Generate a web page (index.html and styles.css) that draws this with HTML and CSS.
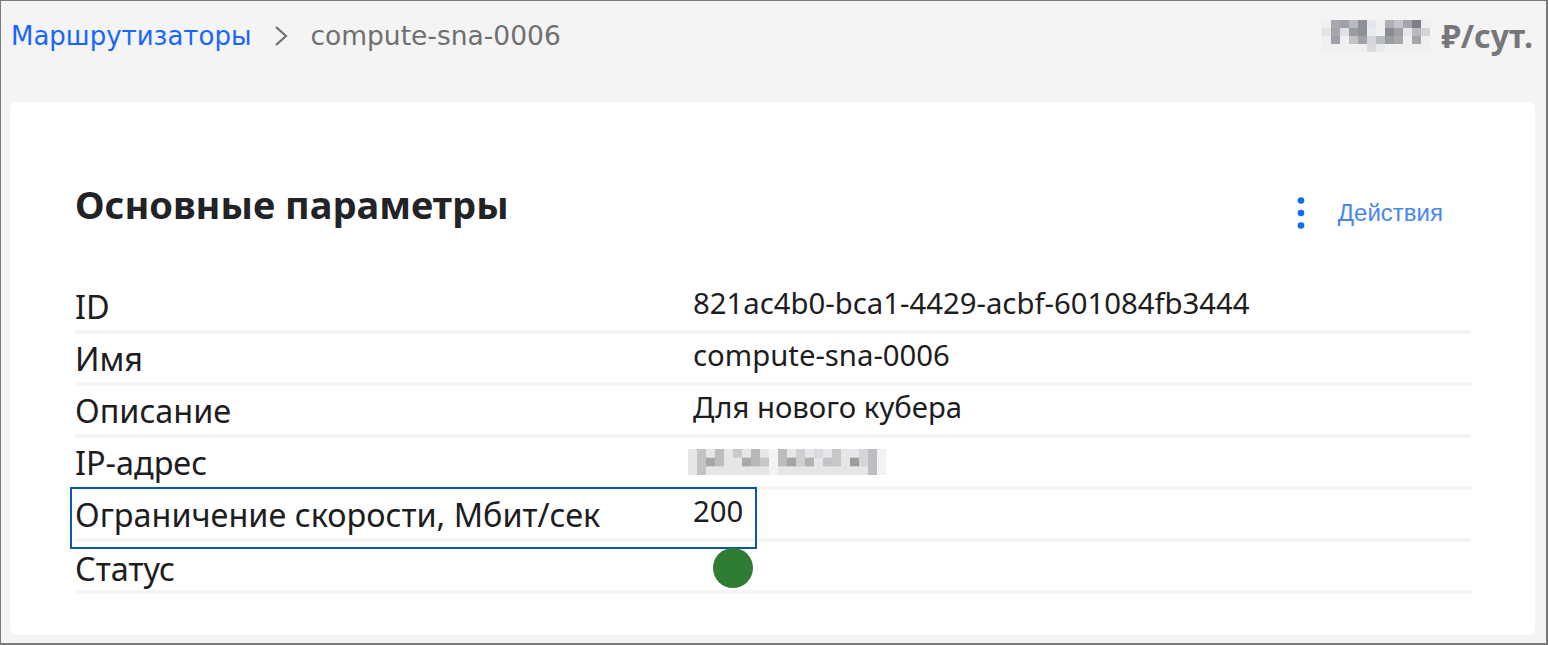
FILE: index.html
```html
<!DOCTYPE html>
<html lang="ru">
<head>
    <meta charset="UTF-8">
    <meta name="viewport" content="width=device-width, initial-scale=1.0">
    <title>compute-sna-0006</title>
    <link rel="stylesheet" href="styles.css">
</head>
<body>
    <div class="window">
        <header class="topbar">
            <nav class="crumbs">
                <a href="#" class="crumb-link">Маршрутизаторы</a>
                <svg class="crumb-sep" width="16" height="22" viewBox="0 0 16 22">
                    <polyline points="3,2 13,11 3,20" fill="none" stroke="#707070" stroke-width="2.2"/>
                </svg>
                <span class="crumb-current">compute-sna-0006</span>
            </nav>
            <div class="price">
                <!-- blurred amount -->
                <svg class="blur" width="108" height="32" viewBox="0 0 12 4" preserveAspectRatio="none">
                    <rect x="0" y="0" width="12" height="4" fill="#f0f0f1"/>
                    <rect x="1" y="0" width="1" height="1" fill="#a9a9ad"/>
                    <rect x="2" y="0" width="1" height="1" fill="#9ea3ab"/>
                    <rect x="3" y="0" width="1" height="1" fill="#b9b9bd"/>
                    <rect x="4" y="0" width="1" height="2" fill="#8f9096"/>
                    <rect x="5" y="0" width="1" height="1" fill="#e3e6ec"/>
                    <rect x="7" y="0" width="1" height="1" fill="#aeb0b6"/>
                    <rect x="8" y="0" width="1" height="1" fill="#c4c6ca"/>
                    <rect x="9" y="0" width="1" height="1" fill="#a4a5aa"/>
                    <rect x="10" y="0" width="1" height="1" fill="#7d7f86"/>
                    <rect x="0" y="1" width="1" height="1" fill="#e4e4e6"/>
                    <rect x="1" y="1" width="1" height="1" fill="#a8a6a8"/>
                    <rect x="2" y="1" width="1" height="1" fill="#dde2e8"/>
                    <rect x="3" y="1" width="1" height="1" fill="#9c9ca0"/>
                    <rect x="5" y="1" width="1" height="1" fill="#e8ebf0"/>
                    <rect x="7" y="1" width="1" height="1" fill="#8c8d93"/>
                    <rect x="8" y="1" width="1" height="1" fill="#9e9fa4"/>
                    <rect x="9" y="1" width="1" height="1" fill="#e7e8ec"/>
                    <rect x="10" y="1" width="1" height="1" fill="#bdb8b8"/>
                    <rect x="11" y="1" width="1" height="1" fill="#cfd6dd"/>
                    <rect x="1" y="2" width="1" height="1" fill="#9da1aa"/>
                    <rect x="3" y="2" width="1" height="1" fill="#c3c3c7"/>
                    <rect x="4" y="2" width="1" height="1" fill="#a2a2a6"/>
                    <rect x="5" y="2" width="1" height="1" fill="#d3d6dc"/>
                    <rect x="6" y="2" width="1" height="1" fill="#b7babf"/>
                    <rect x="7" y="2" width="1" height="1" fill="#9b9ca0"/>
                    <rect x="8" y="2" width="1" height="1" fill="#a7a8ac"/>
                    <rect x="10" y="2" width="1" height="1" fill="#a4a6ac"/>
                    <rect x="5" y="3" width="1" height="1" fill="#dadada"/>
                    <rect x="6" y="3" width="1" height="1" fill="#e6eaef"/>
                </svg>
                <span class="price-unit">₽/сут.</span>
            </div>
        </header>

        <section class="card">
            <div class="card-head">
                <h2 class="card-title">Основные параметры</h2>
                <a href="#" class="actions">
                    <svg class="kebab" width="8" height="32" viewBox="0 0 8 32">
                        <circle cx="4" cy="3.5" r="3.3" fill="#0b6cf5"/>
                        <circle cx="4" cy="16" r="3.3" fill="#0b6cf5"/>
                        <circle cx="4" cy="28.5" r="3.3" fill="#0b6cf5"/>
                    </svg>
                    <span>Действия</span>
                </a>
            </div>

            <div class="params">
                <div class="param-row">
                    <div class="param-label">ID</div>
                    <div class="param-value">821ac4b0-bca1-4429-acbf-601084fb3444</div>
                </div>
                <div class="param-row">
                    <div class="param-label">Имя</div>
                    <div class="param-value">compute-sna-0006</div>
                </div>
                <div class="param-row">
                    <div class="param-label">Описание</div>
                    <div class="param-value">Для нового кубера</div>
                </div>
                <div class="param-row">
                    <div class="param-label">IP-адрес</div>
                    <div class="param-value">
                        <svg class="blur" width="198" height="26" viewBox="0 0 22 3" preserveAspectRatio="none">
                            <rect x="0" y="0" width="22" height="3" fill="#e6e6e8"/>
                            <rect x="1" y="0" width="1" height="3" fill="#c3c3c5"/>
                            <rect x="2" y="1" width="1" height="1" fill="#a7a7aa"/>
                            <rect x="3" y="0" width="1" height="2" fill="#bdbdc0"/>
                            <rect x="5" y="0" width="1" height="1" fill="#c9c9cc"/>
                            <rect x="6" y="1" width="1" height="1" fill="#a9a9ac"/>
                            <rect x="7" y="0" width="1" height="2" fill="#b9b7b8"/>
                            <rect x="8" y="1" width="1" height="1" fill="#c7c7ca"/>
                            <rect x="9" y="0" width="1" height="3" fill="#f3f3f3"/>
                            <rect x="10" y="0" width="1" height="2" fill="#bcbcbf"/>
                            <rect x="11" y="1" width="1" height="1" fill="#a3a3a6"/>
                            <rect x="12" y="0" width="1" height="2" fill="#cfcfd2"/>
                            <rect x="13" y="1" width="1" height="1" fill="#b2b2b5"/>
                            <rect x="14" y="0" width="1" height="1" fill="#d6d9dd"/>
                            <rect x="15" y="1" width="1" height="1" fill="#c2c2c5"/>
                            <rect x="16" y="0" width="1" height="2" fill="#c8c6c6"/>
                            <rect x="18" y="1" width="1" height="1" fill="#a09c9c"/>
                            <rect x="19" y="0" width="1" height="2" fill="#d2d5da"/>
                            <rect x="20" y="0" width="1" height="3" fill="#bdbdc0"/>
                            <rect x="21" y="0" width="1" height="3" fill="#f0f2f5"/>
                        </svg>
                    </div>
                </div>
                <div class="param-row focused">
                    <div class="param-label">Ограничение скорости, Мбит/сек</div>
                    <div class="param-value">200</div>
                </div>
                <div class="param-row">
                    <div class="param-label">Статус</div>
                    <div class="param-value"><span class="status-dot"></span></div>
                </div>
            </div>
        </section>
    </div>
</body>
</html>
```

FILE: styles.css
```css
* {
    margin: 0;
    padding: 0;
    box-sizing: border-box;
}

body {
    background-color: #f4f4f4;
    font-family: 'Noto Sans', 'Open Sans', sans-serif;
    color: #1d1d1f;
}

.window {
    height: 645px;
    border-style: solid;
    border-color: #7a7a7a;
    border-width: 1px 2px 2px 1px;
    padding: 0 11px 8px 9px;
    display: flex;
    flex-direction: column;
}

/* top bar */
.topbar {
    height: 101px;
    display: flex;
    justify-content: space-between;
    align-items: flex-start;
    padding-top: 15px;
}

.crumbs {
    display: flex;
    align-items: center;
    gap: 21px;
    font-family: 'DejaVu Sans', sans-serif;
    font-size: 26px;
    line-height: 40px;
    padding-left: 1px;
}

.crumb-link {
    color: #1766ff;
    text-decoration: none;
}

.crumb-sep {
    margin-left: 1px;
}

.crumb-current {
    color: #6f6f73;
    font-size: 26.5px;
}

.price {
    display: flex;
    align-items: center;
    gap: 12px;
    padding-right: 2px;
}

.price .blur {
    display: block;
}

.price-unit {
    font-weight: 700;
    font-size: 32px;
    line-height: 40px;
    color: #76767b;
}

/* card */
.card {
    flex: 1;
    background-color: #fff;
    border-radius: 6px;
    padding: 0 64px 0 65px;
}

.card-head {
    display: flex;
    justify-content: space-between;
    align-items: flex-start;
    padding-top: 76px;
    height: 180px;
}

.card-title {
    font-size: 38px;
    font-weight: 700;
    line-height: 52px;
    color: #222326;
}

.actions {
    display: flex;
    align-items: center;
    gap: 33px;
    margin-top: 19px;
    margin-right: 28px;
    text-decoration: none;
    color: #4a86f0;
    font-family: 'Liberation Sans', Arial, sans-serif;
    font-size: 24px;
}

.kebab {
    display: block;
}

/* parameter rows */
.param-row {
    position: relative;
    display: grid;
    grid-template-columns: 618px 1fr;
    align-items: center;
    height: 52px;
    border-bottom: 4px solid #f4f4f4;
}

.param-label {
    font-size: 32.4px;
    line-height: 48px;
}

.param-value {
    font-size: 29.3px;
    line-height: 40px;
    padding-bottom: 6px;
    display: flex;
    align-items: center;
}

.param-value .blur {
    display: block;
    margin-left: -5px;
    margin-top: 6px;
}

.param-row.focused::after {
    content: "";
    position: absolute;
    left: -5px;
    top: -3px;
    width: 683px;
    height: 58px;
    border: 2px solid #0b57a8;
}

.status-dot {
    display: block;
    width: 40px;
    height: 40px;
    border-radius: 50%;
    background-color: #2e7d32;
    margin-left: 20px;
    margin-top: 6px;
}
```
